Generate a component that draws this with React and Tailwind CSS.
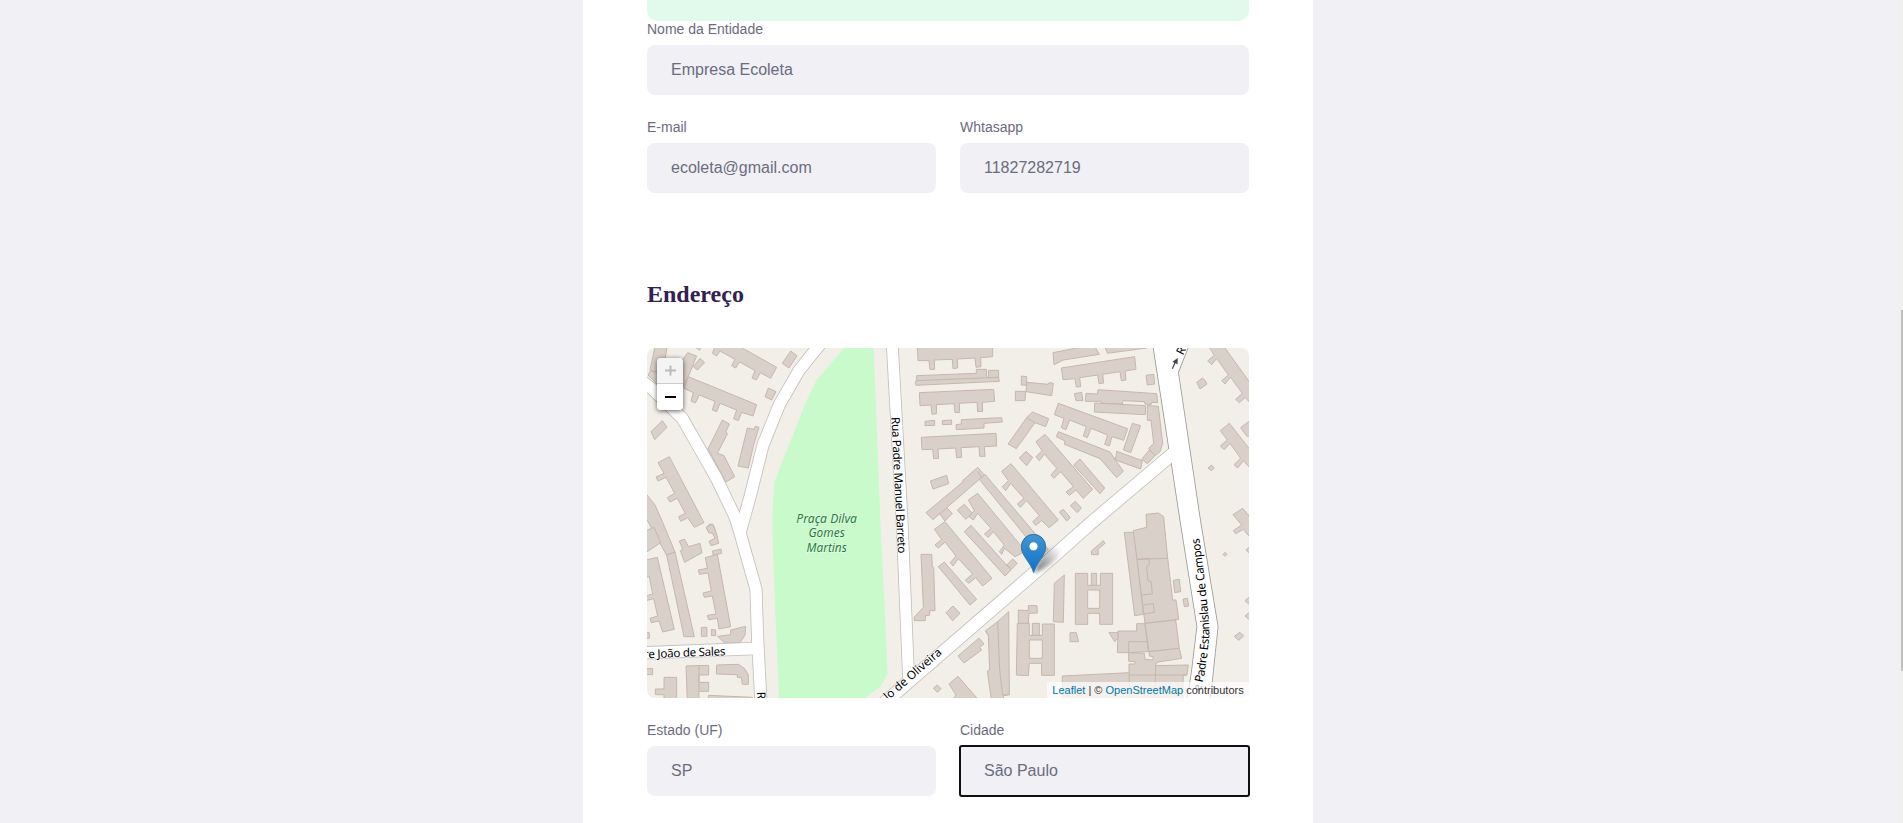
const BLOCKS = [
  {
    at: 'translate(0 0)',
    shapes: [
      '45,20 81,20 70,95 62,100 30,90',
      '24,105 32,92 60,102 90,140 70,150',
      '143,38 170,48 148,102 130,140 100,100',
      '180,55 194,68 172,90 160,80',
      '163,20 183,20 179,31',
      '225,20 300,20 410,82 392,115 361,98 349,120 336,114 345,92 299,66 287,84 275,77 285,58 240,33 230,48 217,40',
      '452,33 471,47 447,84 427,70',
      '385,144 408,155 395,180 375,170',
      '145,110 350,194 339,228 305,217 295,242 281,236 290,210 240,190 230,215 217,210 225,184 178,165 166,189 153,183 160,158 132,145',
      '247,240 268,252 258,275 262,282 232,340 252,347 284,410 258,426 204,327',
      '322,264 342,268 346,259 357,262 340,318 325,384 294,378',
      '67,242 81,262 44,299 33,275',
      '88,350 54,368 72,400 48,411 54,423 78,412 104,460 82,473 90,486 112,475 136,520 116,530 122,544 143,533 163,562 192,548',
      '10,450 21,465 45,495 65,540 105,636 80,646 21,540 10,540',
      '205,556 210,551 220,556 226,570 208,575',
    ],
    lines: [],
  },
  {
    at: 'translate(0 540)',
    shapes: [
      '10,35 42,22 62,68 10,103',
      '80,105 105,96 163,350 132,350',
      '10,122 52,112 103,328 68,336 57,303 34,308 30,295 53,288 41,236 10,244 10,230 38,222 28,170 10,174',
      '10,338 28,338 28,355 10,355',
      '118,63 133,57 146,80 180,70 186,98 134,127 121,92 128,88',
      '198,22 218,12 230,42 236,70 213,77 207,64 225,55 218,40 206,38',
      '217,93 243,87 245,100 220,106',
      '196,113 232,103 272,320 237,327 232,295 206,299 202,286 228,282 217,228 193,232 189,219 214,213 204,159 178,163 175,150 202,145',
      '184,322 201,322 201,349 184,349',
      '214,328 227,330 227,347 214,347',
      '233,349 272,344 272,330 317,319 315,345 300,368 255,370',
      '10,446 38,446 38,464 10,464',
      '72,472 110,472 110,545 72,545 72,524 46,524 46,507 72,507',
      '138,438 206,436 206,465 177,465 177,487 206,487 206,514 177,514 177,545 142,545',
      '230,435 295,433 314,446 325,465 325,493 307,493 304,473 292,472 292,464 229,462',
      '205,526 337,532 337,545 205,545',
    ],
    lines: ['177,438 177,514'],
  },
  {
    at: 'translate(615 0)',
    shapes: [
      '217,15 443,15 443,50 407,53 408,80 393,82 390,54 337,57 338,84 324,86 322,58 268,60 269,88 255,88 252,62 219,62',
      '215,107 394,100 394,88 424,88 425,112 461,112 463,124 213,136 211,124 215,122',
      '430,91 461,91 461,112 431,113',
      '223,158 446,148 449,184 412,187 413,214 398,215 396,187 343,190 344,217 330,218 327,191 274,194 275,221 261,223 258,195 225,197',
      '240,244 269,241 269,256 240,257',
      '292,242 320,240 320,253 292,254',
      '349,239 470,233 472,246 417,250 417,264 334,269 333,254 349,252',
      '229,292 453,280 455,318 418,320 420,349 404,349 402,320 348,323 350,352 335,353 332,324 279,327 281,355 266,356 263,328 231,329',
      '256,423 305,406 311,431 264,447',
      '283,520 302,500 322,520 300,543',
      '243,518 352,427 354,421 398,382 418,405 264,539',
      '403,418 420,403 610,628 588,646',
      '337,510 358,493 382,520 362,538',
      '529,108 545,110 545,136 529,135',
      '511,154 542,154 540,182 511,182',
      '546,127 610,133 612,128 625,130 620,167 543,155',
      '562,216 611,236 602,260 570,248 514,326 489,312 545,233',
      '543,334 551,341 563,352 545,377 523,354',
      '470,394 498,371 640,540 612,563 590,542 572,556 563,545 583,527 545,482 526,502 517,492 537,475 497,430 482,452 472,440 490,422',
    ],
    lines: ['215,122 461,112', '545,233 570,248', '398,394 410,412'],
  },
  {
    at: 'translate(615 540)',
    shapes: [
      '370,-60 398,-80 530,80 530,100 510,110 478,85 470,103 463,95 478,75 445,35 430,52 418,42 438,25 398,-20 385,0 372,-10 388,-28',
      '268,28 300,5 441,175 413,198 392,173 371,190 361,180 383,162 340,116 324,138 316,128 333,108 300,66 280,84 270,75 290,58',
      '358,35 378,16 498,150 480,168',
      '485,135 503,117 517,130 500,147',
      '280,140 298,126 395,238 375,255',
      '228,103 260,103 262,140 266,142 270,272 254,272 254,286 241,287 241,302 208,302 208,291 235,262',
      '303,278 324,258 345,280 323,302',
      '339,408 402,354 417,372 404,382 410,390 357,429',
      '421,333 458,305 491,275 493,524 475,527 478,545 440,545 427,453 434,450 430,345',
      '265,505 277,495 288,506 277,517',
      '312,492 339,469 405,545 320,545 333,525',
      '520,270 550,272 550,257 576,257 577,279 552,280 550,310 520,310',
      '562,310 583,310 583,346 562,346',
      '517,310 553,310 553,346 592,346 592,312 628,312 628,466 590,466 590,430 553,430 550,467 514,465',
    ],
    lines: ['458,305 464,450 473,525 493,524', '430,345 421,333'],
    courts: ['553,360 592,360 592,415 553,415'],
  },
  {
    at: 'translate(1230 0)',
    shapes: [
      '9,38 100,20 134,20 148,43 40,60 12,74',
      '165,20 172,40 290,24 290,20',
      '34,84 254,50 258,88 225,93 228,120 214,122 210,95 158,103 161,129 147,131 143,105 89,113 92,140 79,141 75,116 39,119',
      '288,106 311,103 314,132 292,135',
      '73,161 95,157 99,182 78,182',
      '108,160 142,162 144,149 320,161 323,188 305,187 303,194 285,192 283,185 219,182 217,192 155,190 153,184 106,184',
      '134,189 287,197 286,224 133,216',
      '292,197 325,199 338,310 330,335 315,347 296,325 311,310 303,241 292,241',
      '275,358 298,330 315,347 292,371',
      '25,190 233,266 221,301 186,290 178,318 164,313 173,285 123,265 112,293 100,288 109,260 59,240 48,269 34,263 42,235 13,224',
      '247,250 272,257 242,338 220,330',
      '25,275 180,336 220,394 200,413 150,356 43,313 45,303 19,290',
      '200,334 277,362 272,387 196,360',
      '-42,305 -15,283 128,448 100,475 78,450 58,466 48,456 70,440 32,395 12,415 3,405 20,385 -17,342 -32,362 -42,350 -24,332',
      '90,357 164,444 150,461 71,375',
      '76,484 94,504 82,518 61,497',
      '40,508 61,533 50,543 28,516',
      '477,20 522,20 605,135 605,195 586,172 568,188 557,178 577,160 542,112 525,132 515,122 535,105 500,55 485,74 473,63 493,46',
      '440,127 458,114 464,120 471,132 450,147',
      '572,263 605,238 605,290 590,288',
      '511,272 538,250 605,335 605,390 580,362 563,384 552,374 572,355 540,310 523,329 511,318 532,300',
      '474,384 484,375 493,384 484,392',
      '549,524 578,505 605,537 605,598 580,568 557,581 550,572 575,555',
    ],
    lines: [],
  },
  {
    at: 'translate(1230 540)',
    shapes: [
      '223,37 253,37 280,283 254,287',
      '250,32 290,22 288,-17 325,-21 341,-10 353,115 368,240 378,240 386,298 285,310',
      '204,333 260,333 260,311 285,311 295,395 236,398 202,398',
      '285,310 377,300 388,385 297,395',
      '236,398 283,400 285,418 308,420 310,410 298,408 297,395 388,385 395,415 320,427 317,437 415,435 411,465 400,466 397,545 37,545 37,468 237,458 237,432 255,432 255,424 236,424',
      '370,181 388,178 392,215 374,218',
      '399,237 412,235 416,258 403,260',
      '124,93 160,62 165,70 144,88 145,104 125,104',
      '124,160 140,160 140,196 124,196',
      '76,160 113,160 113,196 151,196 151,160 188,160 188,313 149,313 149,280 113,280 113,313 76,313',
      '60,338 79,338 86,365 60,365',
      '177,338 204,338 204,355 194,365',
      '13,190 43,165 40,307 10,305',
      '519,103 525,97 531,103 525,109',
      '588,90 605,75 605,105',
      '585,242 605,225 605,260',
      '585,288 605,270 605,305',
      '553,349 570,337 581,348 566,361',
    ],
    lines: [
      '262,118 353,115',
      '262,118 297,115 298,135 290,140 294,183 303,184 307,222 275,225',
      '279,255 310,251 313,277 282,282',
      '236,398 236,365 292,365',
      '237,465 411,465',
      '317,437 314,545',
      '237,458 240,545',
    ],
    courts: ['113,210 149,210 149,265 113,265'],
  },
];

const STREETS = [
  { d: 'M0 118 L40 150 L127 235 L228 412 L285 530 L300 578 L348 748 L353 900 L363 1090', w: 34 },
  { d: 'M551 0 L531 24 L478 90 L418 194 L369 315 L331 467 L300 578', w: 34 },
  { d: 'M0 939 L355 925', w: 35 },
  { d: 'M756 0 L786 540 L806 1020', w: 33 },
  { d: 'M730 1091 L1245 645 L1348 553 L1615 327', w: 37 },
];

const AVENUE =
  'M1537 0 L1541 24 L1587 322 L1594 363 L1621 540 L1672 860 L1655 1000 L1640 1090 L1706 1090 L1714 1040 L1733 860 L1680 540 L1614 97 L1643 24 L1652 0 Z';

function Buildings({ at, shapes, lines, courts = [] }) {
  return (
    <g transform={at} stroke="#c6b7ad" strokeWidth="3" strokeLinejoin="round">
      {shapes.map((points) => (
        <polygon key={points} points={points} fill="#d9d0c9" />
      ))}
      {lines.map((points) => (
        <polyline key={points} points={points} fill="none" />
      ))}
      {courts.map((points) => (
        <polygon key={points} points={points} fill="#f2efe9" />
      ))}
    </g>
  );
}

function StreetName({ at, length, size = 35, children }) {
  return (
    <text
      transform={at}
      textLength={length}
      fontSize={size}
      fill="#000"
      stroke="#fff"
      strokeWidth="4"
      strokeLinejoin="round"
      paintOrder="stroke"
    >
      {children}
    </text>
  );
}

function StreetMap() {
  return (
    <svg
      viewBox="21 24 1806 1050"
      className="block h-full w-full"
      style={{ fontFamily: '"Noto Sans", sans-serif' }}
      aria-hidden="true"
    >
      <defs>
        <linearGradient id="pin" x1="0" y1="0" x2="0" y2="1">
          <stop offset="0" stopColor="#3f97d3" />
          <stop offset="1" stopColor="#126fc6" />
        </linearGradient>
        <linearGradient id="pinEdge" x1="0" y1="0" x2="0" y2="1">
          <stop offset="0" stopColor="#2e6c97" />
          <stop offset="1" stopColor="#3883b7" />
        </linearGradient>
        <filter id="soft" x="-40%" y="-40%" width="180%" height="180%">
          <feGaussianBlur stdDeviation="6" />
        </filter>
        <linearGradient id="shade" x1="0" y1="1" x2="1" y2="0">
          <stop offset="0" stopColor="#000" stopOpacity="0.6" />
          <stop offset="0.9" stopColor="#000" stopOpacity="0.03" />
        </linearGradient>
      </defs>
      <rect x="0" y="0" width="1860" height="1100" fill="#f2efe9" />
      <polygon
        fill="#c8facc"
        points="612,24 530,120 498,185 403,425 397,520 397,560 403,740 417,1074 675,1074 720,1040 743,1002 721,540 701,24"
      />
      {BLOCKS.map((b) => (
        <Buildings key={b.at} {...b} />
      ))}
      <g fill="none" strokeLinejoin="round">
        {STREETS.map((s) => (
          <path key={s.d} d={s.d} stroke="#c2c0bd" strokeWidth={s.w + 5} />
        ))}
        <path d={AVENUE} stroke="#9b9b98" strokeWidth="5" />
        {STREETS.map((s) => (
          <path key={s.d} d={s.d} stroke="#fff" strokeWidth={s.w} />
        ))}
        <path d={AVENUE} fill="#fff" />
      </g>
      <g
        fontStyle="italic"
        fontSize="38"
        textAnchor="middle"
        fill="#1a8035"
        stroke="#e9fbea"
        strokeWidth="4"
        paintOrder="stroke"
      >
        <text x="560" y="549" textLength="182" lengthAdjust="spacingAndGlyphs">Praça Dilva</text>
        <text x="560" y="592" textLength="109" lengthAdjust="spacingAndGlyphs">Gomes</text>
        <text x="560" y="636" textLength="121" lengthAdjust="spacingAndGlyphs">Martins</text>
      </g>
      <StreetName at="translate(754 232) rotate(87.2)" length="409">Rua Padre Manuel Barreto</StreetName>
      <StreetName at="translate(13 955) rotate(-2.2)" length="244">re João de Sales</StreetName>
      <StreetName at="translate(744 1082) rotate(-41)" length="216">lo de Oliveira</StreetName>
      <StreetName at="translate(351 1056) rotate(88)">R</StreetName>
      <path
        id="avenueLine"
        fill="none"
        d="M1670 1130 Q1682 1050 1694 1000 Q1709 900 1708 870 Q1702 760 1673 560"
      />
      <text
        fontSize="35"
        fill="#000"
        stroke="#fff"
        strokeWidth="4"
        paintOrder="stroke"
      >
        <textPath href="#avenueLine" startOffset="76" textLength="465">e Padre Estanislau de Campos</textPath>
      </text>
      <StreetName at="translate(1629 47) rotate(-63)">Ru</StreetName>
      <g fill="#444" stroke="#444" strokeWidth="3.500">
        <path d="M1597 86 L1608 62" fill="none" />
        <path d="M1613 55 L1598 65 L1612 72 Z" strokeWidth="1" />
      </g>
      <path
        d="M1181 699 L1204 646 Q1235 612 1258 622 Q1272 632 1250 656 Q1225 682 1181 699 Z"
        fill="url(#shade)"
        filter="url(#soft)"
      />
      <path
        d="M1181 698 C1173 668 1144 648 1144 620 A36.5 37 0 0 1 1217 620 C1217 648 1189 668 1181 698 Z"
        fill="url(#pin)"
        stroke="url(#pinEdge)"
        strokeWidth="3"
      />
      <circle cx="1180.500" cy="619" r="13.500" fill="#fff" stroke="#2e78ad" strokeWidth="2" />
    </svg>
  );
}

function Field({ label, value, focused = false }) {
  return (
    <label className="flex min-w-0 flex-1 flex-col">
      <span className="mb-2 text-sm leading-4 text-[#6c6c80]">{label}</span>
      <input
        defaultValue={value}
        className={
          focused
            ? 'h-[50px] w-full rounded-[2px] bg-[#f0f0f5] px-6 pb-px text-base text-[#6c6c80] outline-2 -outline-offset-1 outline-[#101010]'
            : 'h-[50px] w-full rounded-lg bg-[#f0f0f5] px-6 pb-px text-base text-[#6c6c80] outline-none'
        }
      />
    </label>
  );
}

export default function App() {
  return (
    <div className="flex h-[823px] w-full overflow-hidden bg-[#f0f0f5] font-['Liberation_Sans',Arial,sans-serif]">
      <div className="flex flex-1 justify-center pr-[7px]">
        <main className="flex h-full w-[730px] flex-col bg-white px-16">
          <div className="h-[21px] shrink-0 rounded-b-[10px] bg-[#e1faec]" />
          <div className="flex">
            <Field label="Nome da Entidade" value="Empresa Ecoleta" />
          </div>
          <div className="mt-6 flex gap-6">
            <Field label="E-mail" value="ecoleta@gmail.com" />
            <Field label="Whtasapp" value="11827282719" />
          </div>
          <h2 className="mt-[87px] font-['Liberation_Serif',serif] text-2xl leading-7 font-bold text-[#322153]">
            Endereço
          </h2>
          <div className="relative mt-10 h-[350px] shrink-0 overflow-hidden rounded-lg">
            <StreetMap />
            <div className="absolute top-2.5 left-2.5 w-[26px] overflow-hidden rounded-[4px] shadow-[0_1px_5px_rgba(0,0,0,0.65)]">
              <button className="flex h-[26px] w-full items-center justify-center border-b border-[#ccc] bg-[#f4f4f4] text-[#bbb]">
                <svg viewBox="0 0 11 11" className="size-[11px]" stroke="currentColor" strokeWidth="2">
                  <path d="M0 5.500H11M5.500 0.500V10.500" />
                </svg>
              </button>
              <button className="flex h-[26px] w-full items-center justify-center bg-white text-black">
                <svg viewBox="0 0 11 12" className="h-3 w-[11px]" stroke="currentColor" strokeWidth="2">
                  <path d="M0 6H11" />
                </svg>
              </button>
            </div>
            <div className="absolute right-0 bottom-0 flex h-4 w-[202px] items-center justify-center bg-white/70 text-[11px] leading-4 whitespace-pre text-[#333]">
              <span className="text-[#0078a8]">Leaflet</span>
              {' | © '}
              <span className="text-[#0078a8]">OpenStreetMap</span>
              {' contributors'}
            </div>
          </div>
          <div className="mt-6 flex gap-6">
            <Field label="Estado (UF)" value="SP" />
            <Field label="Cidade" value="São Paulo" focused />
          </div>
        </main>
      </div>
      <div className="-ml-[5px] flex w-[5px] justify-end bg-[#f0f0f0]">
        <div className="mt-[310px] h-[361px] w-0.5 bg-[#c1c1c1]" />
      </div>
    </div>
  );
}
